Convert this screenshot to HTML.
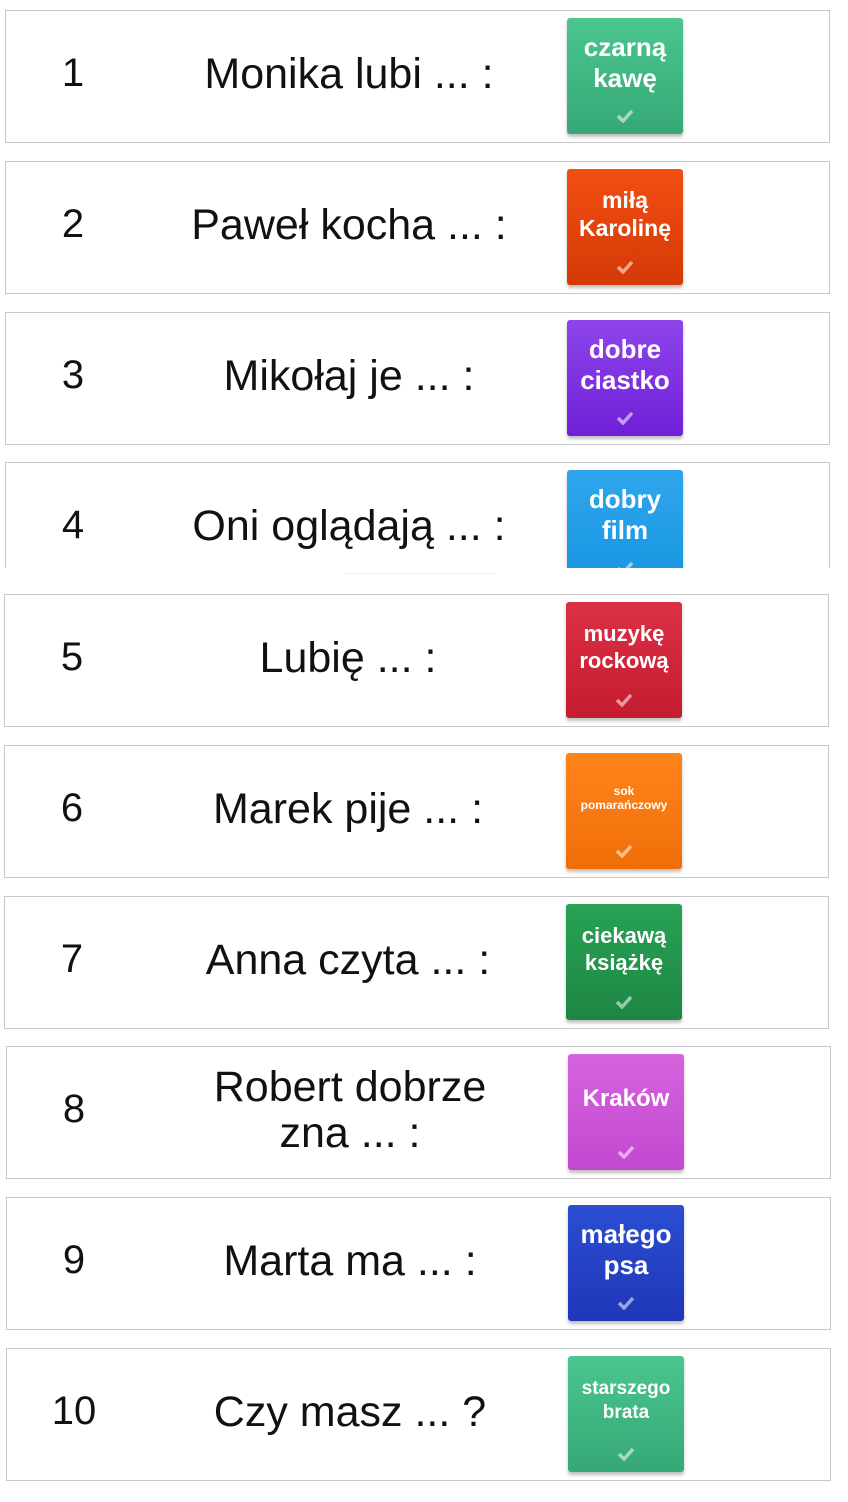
<!DOCTYPE html>
<html><head><meta charset="utf-8"><style>
html,body{margin:0;padding:0;background:#fff;width:848px;height:1502px;overflow:hidden;position:relative;font-family:"Liberation Sans",sans-serif;}
.row{position:absolute;width:823px;height:131px;border:1px solid #c8c8c8;background:#fff;}
.num{position:absolute;left:27px;width:80px;top:0;height:125px;display:flex;align-items:center;justify-content:center;font-size:40px;color:#111;}
.q{position:absolute;left:143px;width:400px;top:0;height:125px;display:flex;align-items:center;justify-content:center;text-align:center;font-size:43px;line-height:46px;color:#111;}
.t{position:absolute;left:561px;top:7px;width:116px;height:116px;border-radius:3px;box-shadow:0 3px 3px rgba(0,0,0,.25);color:#fff;font-weight:bold;text-align:center;display:flex;align-items:center;justify-content:center;flex-direction:column;box-sizing:border-box;padding-bottom:26px;}
.t svg{position:absolute;left:49px;bottom:11px;}
</style></head><body>
<div class="row" style="left:5px;top:10px"><div class="num">1</div><div class="q">Monika lubi ... :</div><div class="t" style="background:linear-gradient(#4ac68e,#36a877);font-size:26px;line-height:31px">czarną<br>kawę<svg width="18" height="14"><path d="M2 7l5 5 9-10" stroke="rgba(255,255,255,.55)" stroke-width="3.5" fill="none"/></svg></div></div>
<div class="row" style="left:5px;top:161px"><div class="num">2</div><div class="q">Paweł kocha ... :</div><div class="t" style="background:linear-gradient(#f24e12,#d43a06);font-size:23px;line-height:28px">miłą<br>Karolinę<svg width="18" height="14"><path d="M2 7l5 5 9-10" stroke="rgba(255,255,255,.55)" stroke-width="3.5" fill="none"/></svg></div></div>
<div class="row" style="left:5px;top:312px"><div class="num">3</div><div class="q">Mikołaj je ... :</div><div class="t" style="background:linear-gradient(#8d45ea,#7020d8);font-size:26px;line-height:31px">dobre<br>ciastko<svg width="18" height="14"><path d="M2 7l5 5 9-10" stroke="rgba(255,255,255,.55)" stroke-width="3.5" fill="none"/></svg></div></div>
<div style="position:absolute;left:0;top:0;width:848px;height:568px;overflow:hidden"><div class="row" style="left:5px;top:462px"><div class="num">4</div><div class="q">Oni oglądają ... :</div><div class="t" style="background:linear-gradient(#2fa6ec,#1795e2);font-size:26px;line-height:31px">dobry<br>film<svg width="18" height="14"><path d="M2 7l5 5 9-10" stroke="rgba(255,255,255,.55)" stroke-width="3.5" fill="none"/></svg></div></div></div>
<div style="position:absolute;left:345px;top:573px;width:150px;height:1px;background:#eee"></div>
<div class="row" style="left:4px;top:594px"><div class="num">5</div><div class="q">Lubię ... :</div><div class="t" style="background:linear-gradient(#dc3045,#c41c30);font-size:22px;line-height:27px">muzykę<br>rockową<svg width="18" height="14"><path d="M2 7l5 5 9-10" stroke="rgba(255,255,255,.55)" stroke-width="3.5" fill="none"/></svg></div></div>
<div class="row" style="left:4px;top:745px"><div class="num">6</div><div class="q">Marek pije ... :</div><div class="t" style="background:linear-gradient(#ff841c,#f06e08);font-size:12px;line-height:14px">sok<br>pomarańczowy<svg width="18" height="14"><path d="M2 7l5 5 9-10" stroke="rgba(255,255,255,.55)" stroke-width="3.5" fill="none"/></svg></div></div>
<div class="row" style="left:4px;top:896px"><div class="num">7</div><div class="q">Anna czyta ... :</div><div class="t" style="background:linear-gradient(#28a255,#1e8644);font-size:22px;line-height:27px">ciekawą<br>książkę<svg width="18" height="14"><path d="M2 7l5 5 9-10" stroke="rgba(255,255,255,.55)" stroke-width="3.5" fill="none"/></svg></div></div>
<div class="row" style="left:6px;top:1046px"><div class="num">8</div><div class="q">Robert dobrze<br>zna ... :</div><div class="t" style="background:linear-gradient(#d564de,#c248d0);font-size:24px;line-height:30px">Kraków<svg width="18" height="14"><path d="M2 7l5 5 9-10" stroke="rgba(255,255,255,.55)" stroke-width="3.5" fill="none"/></svg></div></div>
<div class="row" style="left:6px;top:1197px"><div class="num">9</div><div class="q">Marta ma ... :</div><div class="t" style="background:linear-gradient(#2c4ed2,#1f36b8);font-size:26px;line-height:31px">małego<br>psa<svg width="18" height="14"><path d="M2 7l5 5 9-10" stroke="rgba(255,255,255,.55)" stroke-width="3.5" fill="none"/></svg></div></div>
<div class="row" style="left:6px;top:1348px"><div class="num">10</div><div class="q">Czy masz ... ?</div><div class="t" style="background:linear-gradient(#4ac68e,#36a877);font-size:19px;line-height:24px">starszego<br>brata<svg width="18" height="14"><path d="M2 7l5 5 9-10" stroke="rgba(255,255,255,.55)" stroke-width="3.5" fill="none"/></svg></div></div>
</body></html>
